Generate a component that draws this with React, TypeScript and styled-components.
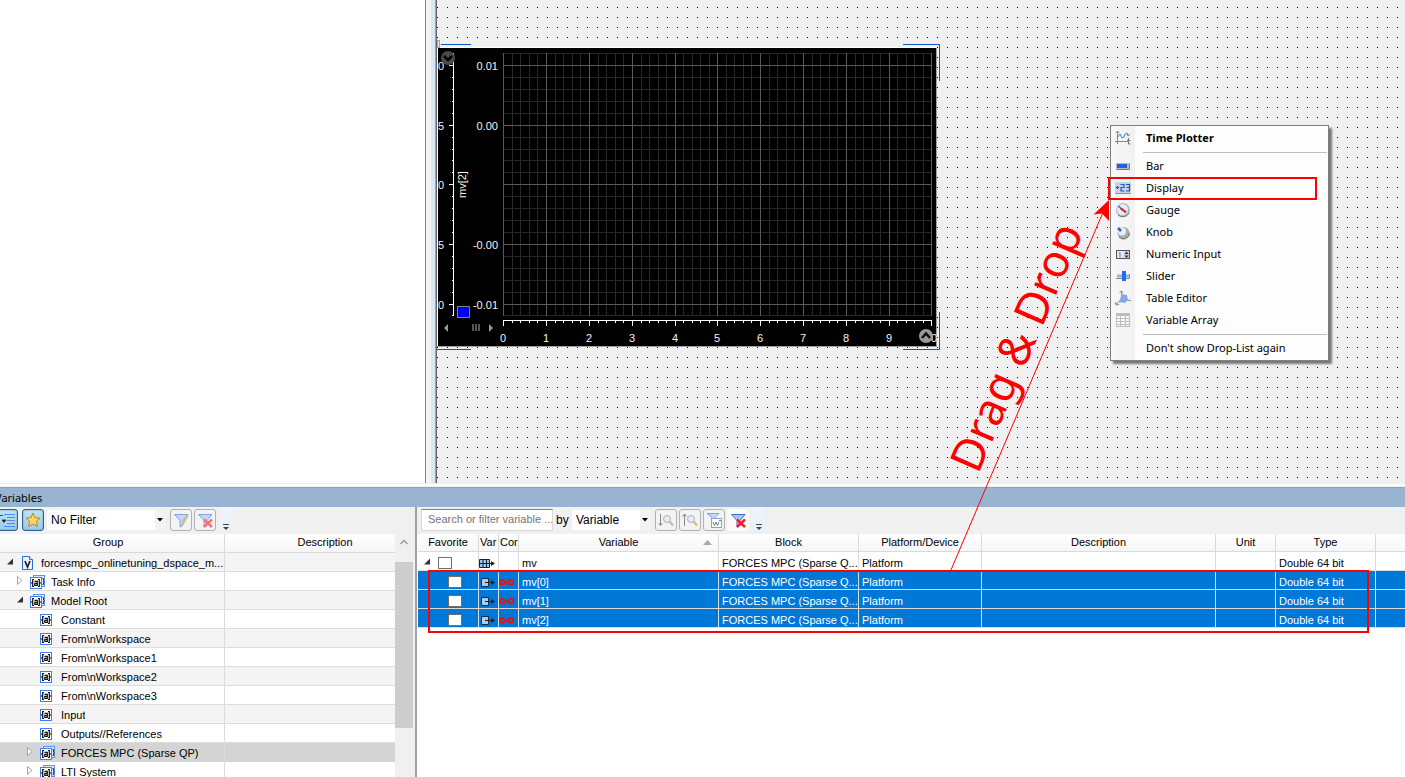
import React from "react";
import styled, { createGlobalStyle, css } from "styled-components";

const GlobalStyle = createGlobalStyle`
  *, *::before, *::after { box-sizing: border-box; }
  html, body { margin: 0; padding: 0; }
  body { background: #f0f0f0; color: #000; font: 11px/14px "Liberation Sans", Arial, sans-serif; }
  button, input, select { font: inherit; color: inherit; margin: 0; }
`;

const Page = styled.div`
  position: relative;
  display: flex;
  flex-direction: column;
  height: 100vh;
  overflow: hidden;
`;

/* ---------- upper work area ---------- */

const Workspace = styled.main`
  flex: 1;
  display: flex;
  min-height: 0;
`;

const ProjectPane = styled.aside`
  flex: 0 0 426px;
  background: #fff;
  border-right: 1px solid #83848f;
`;

const Splitter = styled.div`
  flex: 0 0 11px;
  background: linear-gradient(to right, #f4f4f4 5px, #dce7f5 5px, #dce7f5 9px, #a0a0a0 9px, #a0a0a0 10px, #696969 10px);
`;

const LayoutCanvas = styled.section`
  position: relative;
  flex: 1;
  overflow: hidden;
  background-image:
    linear-gradient(to right, #f0f0f0 9px, transparent 9px),
    linear-gradient(#f0f0f0 9px, #000 9px);
  background-size: 10px 10px;
  background-position: 1px -2px;
`;

const Instrument = styled.svg`
  position: absolute;
  left: 0;
  top: 38px;
  font: 11px "Liberation Sans", Arial, sans-serif;
`;

const Menu = styled.div`
  position: absolute;
  left: 673px;
  top: 125px;
  width: 219px;
  padding: 1px 1px 1px 2px;
  border: 1px solid #808080;
  background: linear-gradient(to right, #f8f8f8, #f1f1f1 24px, #fdfdfd 24px);
  box-shadow: 3px 3px 2px rgba(0, 0, 0, 0.5);
  font: 11px/22px "Noto Sans", "Segoe UI", sans-serif;
`;

const MenuItem = styled.button<{ $strong?: boolean }>`
  display: flex;
  align-items: center;
  width: 100%;
  height: 22px;
  padding: 0 0 0 2px;
  gap: 15px;
  border: 0;
  background: none;
  text-align: left;
  white-space: nowrap;
  font-weight: ${(p) => (p.$strong ? 700 : 400)};
`;

const MenuIcon = styled.svg`
  flex: none;
  width: 16px;
  height: 16px;
`;

const MenuRule = styled.hr`
  height: 1px;
  margin: 3px 0 2px 30px;
  border: 0;
  background: #bdbdbd;
`;

const TargetFrame = styled.div`
  position: absolute;
  left: -3px;
  top: 51px;
  width: 209px;
  height: 23px;
  border: 2px solid #f00;
  pointer-events: none;
`;

/* ---------- variables panel ---------- */

const Panel = styled.section`
  flex: 0 0 294px;
  display: flex;
  flex-direction: column;
  min-height: 0;
  border-top: 1px solid #f0f0f0;
  box-shadow: inset 0 2px #fff;
`;

const PanelTitle = styled.h2`
  flex: none;
  height: 20px;
  margin: 3px 0 0;
  border-top: 1px solid #a0a0a0;
  background: #99b4d1;
  text-indent: -5px;
  font: 11px/20px "Noto Sans", "Segoe UI", sans-serif;
`;

const PanelBody = styled.div`
  flex: 1;
  display: flex;
  min-height: 0;
`;

const TreeSide = styled.div`
  flex: 0 0 417px;
  display: flex;
  flex-direction: column;
  border-right: 2px solid #a0a0a0;
`;

const ListSide = styled.div`
  flex: 1;
  min-width: 0;
  display: flex;
  flex-direction: column;
`;

const Toolbar = styled.div<{ $list?: boolean }>`
  flex: 0 0 27px;
  display: flex;
  align-items: center;
  padding-bottom: 2px;
  padding-left: ${(p) => (p.$list ? 4 : 0)}px;
  margin-left: ${(p) => (p.$list ? 0 : -4)}px;
  overflow: hidden;
  font-size: 12px;
`;

const ToolButton = styled.button<{ $look?: "on" | "flat"; $gap?: number }>`
  flex: none;
  width: 22px;
  height: 22px;
  padding: 2px;
  margin-right: ${(p) => p.$gap ?? 2}px;
  border: 1px solid #adb2b5;
  border-radius: 3px;
  background: #f3f3f3;
  svg { display: block; width: 16px; height: 16px; opacity: 0.6; }
  ${(p) =>
    p.$look === "on" &&
    css`
      border-color: #2c628b;
      background: linear-gradient(#bfe3f5, #9acce6);
      box-shadow: inset 0 0 2px #5b93b5;
      svg { opacity: 1; }
    `}
  ${(p) =>
    p.$look === "flat" &&
    css`
      border-color: transparent;
      background: #fafafa;
      svg { opacity: 1; }
    `}
`;

const Combo = styled.select<{ $width: number }>`
  appearance: none;
  width: ${(p) => p.$width}px;
  height: 20px;
  padding: 0 0 0 4px;
  margin-right: 4px;
  border: 0;
  border-radius: 0;
  outline: 0;
  background:
    url("data:image/svg+xml,%3Csvg xmlns='http://www.w3.org/2000/svg' width='6' height='4'%3E%3Cpath d='M0 0h6L3 3.5z'/%3E%3C/svg%3E") right 3px center no-repeat,
    linear-gradient(#f3f3f3, #f3f3f3) right / 11px 100% no-repeat,
    #fff;
`;

const Overflow = styled.button`
  width: 13px;
  height: 27px;
  padding: 14px 0 0 4px;
  margin-left: 1px;
  border: 0;
  border-radius: 0 4px 4px 0;
  background: linear-gradient(#edf4fc, #e9f0f8);
  svg { display: block; }
`;

const SearchBox = styled.input`
  width: 132px;
  height: 22px;
  padding: 0 0 2px 6px;
  margin-right: 3px;
  border: 1px solid #d9d9d9;
  border-top-color: #808080;
  background: #fff;
  font-size: 11px;
  outline: 0;
  &::placeholder { color: #757575; opacity: 1; }
`;

const ByLabel = styled.label`
  width: 16px;
`;

const TreeBody = styled.div`
  flex: 1;
  display: flex;
  min-height: 0;
  overflow: hidden;
`;

const Grid = styled.table`
  flex: 1;
  align-self: flex-start;
  width: 100%;
  table-layout: fixed;
  border-spacing: 0;
  background: #fff;
  th:last-child, td:last-child { border-right: 0; }
`;

const Th = styled.th<{ $tall?: boolean; $shift?: string; $clip?: boolean }>`
  position: relative;
  height: ${(p) => (p.$tall ? 19 : 18)}px;
  padding: ${(p) => p.$shift ?? "0 0 1px"};
  border: 0 solid #d9dadb;
  border-width: 0 1px 1px 0;
  background: linear-gradient(#fff, #f5f6f7);
  overflow: hidden;
  white-space: nowrap;
  font-weight: 400;
  line-height: 14px;
  text-align: ${(p) => (p.$clip ? "left" : "center")};
`;

const SortMark = styled.svg`
  position: absolute;
  right: 6px;
  top: 6px;
`;

const Td = styled.td`
  height: 19px;
  padding: 2px 0 0 3px;
  border: 0 solid #dcdcdc;
  border-width: 0 1px 1px 0;
  overflow: hidden;
  white-space: nowrap;
  text-overflow: ellipsis;
  line-height: 14px;
`;

const TreeRow = styled.tr<{ $selected: boolean }>`
  background: #fff;
  &:nth-child(odd) { background: #f4f4f4; }
  ${(p) =>
    p.$selected &&
    css`
      && { background: #d4d4d4; }
      td { border-bottom-color: #d4d4d4; }
    `}
`;

const TreeCell = styled.div<{ $level: number }>`
  display: flex;
  align-items: center;
  gap: 5px;
  padding-left: ${(p) => 2 + p.$level * 10}px;
  svg { flex: none; display: block; }
`;

const TreeLabel = styled.span`
  overflow: hidden;
  text-overflow: ellipsis;
`;

const VarRow = styled.tr<{ $selected: boolean }>`
  background: ${(p) => (p.$selected ? "#0078d7" : "#fff")};
  color: ${(p) => (p.$selected ? "#fff" : "#000")};
  td { padding-top: 4px; }
`;

const IconTd = styled(Td)`
  padding-left: 0;
  svg { display: block; }
`;

const CheckCell = styled.div<{ $child: boolean }>`
  display: flex;
  align-items: center;
  gap: 6px;
  padding-left: ${(p) => (p.$child ? 11 : 1)}px;
`;

const Check = styled.input`
  appearance: none;
  width: 14px;
  height: 12px;
  border: 1px solid #6f6f6f;
  background: #fff;
`;

const ScrollBar = styled.div`
  flex: 0 0 19px;
  background: #f0f0f0;
  border-right: 2px solid #f0f0f0;
  svg { display: block; margin: 5px 5px 17px; }
`;

const ScrollThumb = styled.div`
  height: 166px;
  background: #cdcdcd;
`;

const ListBody = styled.div`
  position: relative;
  flex: 1;
  display: flex;
  padding-left: 1px;
  background: #fff;
  min-height: 0;
`;

const SelectionFrame = styled.div`
  position: absolute;
  left: 11px;
  top: 36px;
  width: 941px;
  height: 63px;
  border: 2px solid #f00;
  pointer-events: none;
`;

const Annotation = styled.svg`
  position: absolute;
  left: 0;
  top: 0;
  pointer-events: none;
  font: 45px "Noto Sans", "Segoe UI", sans-serif;
`;

/* ---------- drawings ---------- */

const subdivide = (stops: number[]) =>
  stops.slice(0, -1).flatMap((a, i) => [1, 2, 3, 4].map((k) => a + Math.round((k * (stops[i + 1] - a)) / 5)));

const xMajor = [503, 546, 589, 632, 675, 717, 760, 803, 846, 889, 931];
const yMajor = [65, 125, 184, 244, 304];
const xMinor = subdivide(xMajor);
const yMinor = [53, ...subdivide(yMajor), 315];
const yLabels = ["0.01", "0.00", "", "-0.00", "-0.01"];
const axisDigits = ["0", "5", "0", "5", "0"];

const Plotter = () => (
  <Instrument width="510" height="314" viewBox="437 38 510 314" role="img" aria-label="Time plotter mv[2]">
    <g shapeRendering="crispEdges">
      <path d="M437 47h500v300h-500z" fill="#fff" />
      <path d="M438 48h498v298h-498z" fill="#000" />
      <path d="M936 48h1v299h-500v-1h499z" fill="#a0a0a0" />
      <path d="M437.5 40.500h2v7h-2z" fill="#f0f0f0" stroke="#a0a0a0" />
      <path d="M441 44.500h30M903 44.500h36.500V81M437 349.500h34M903 349.500h36.500V312" fill="none" stroke="#0a56c8" />
      <g fill="#282828">
        {xMinor.map((x) => <rect key={x} x={x} y="53" width="1" height="263" />)}
        {yMinor.map((y) => <rect key={y} x="503" y={y} width="429" height="1" />)}
      </g>
      <g fill="#5a5a5a">
        {xMajor.map((x) => <rect key={x} x={x} y="53" width="1" height="263" />)}
        {yMajor.map((y) => <rect key={y} x="503" y={y} width="429" height="1" />)}
      </g>
      <g fill="#fff">
        <rect x="453" y="53" width="1" height="263" />
        {yMinor.map((y) => <rect key={y} x="452" y={y} width="1" height="1" />)}
        {yMajor.map((y) => <rect key={y} x="449" y={y} width="4" height="1" />)}
        <rect x="503" y="320" width="429" height="1" />
        {xMinor.map((x) => <rect key={x} x={x} y="321" width="1" height="2" />)}
        {xMajor.map((x) => <rect key={x} x={x} y="321" width="1" height="5" />)}
      </g>
      <rect x="457.500" y="306.500" width="12" height="11" fill="#00f" stroke="#808080" />
      <path d="M472 324h2v7h-2zM475 324h2v7h-2zM478 324h2v7h-2z" fill="#555" />
    </g>
    <path d="M448 324v8l-4-4zM489 324v8l4-4z" fill="#999" />
    <g fill="#f4f4f4">
      {yMajor.map((y, i) => <text key={y} x="438" y={y + 5}>{axisDigits[i]}</text>)}
      {yMajor.map((y, i) => yLabels[i] && <text key={y} x="498" y={y + 5} textAnchor="end">{yLabels[i]}</text>)}
      {xMajor.slice(0, 10).map((x, i) => <text key={x} x={x} y="342" textAnchor="middle">{i}</text>)}
      <text x="931" y="342">0</text>
      <text transform="translate(466 198) rotate(-90)">mv[2]</text>
    </g>
    <circle cx="448" cy="58" r="7" fill="#4a4a4a" />
    <path d="M444 56l4 4 4-4" fill="none" stroke="#000" strokeWidth="2.500" />
    <circle cx="926" cy="336" r="7" fill="#9a9a9a" />
    <path d="M922 338l4-4.500 4 4.500" fill="none" stroke="#111" strokeWidth="2.500" />
  </Instrument>
);

const menuArt: Record<string, React.ReactNode> = {
  plot: (
    <g fill="none">
      <path d="M2.500 1v13M0 11.500h13" stroke="#888" />
      <path d="M.500 3l2-2 2 2" stroke="#888" />
      <path d="M2 8l3-4 2 4 2-1 1-3 2-1 1 3 2-2" stroke="#3f7be0" />
      <path d="M13.500 8v6h2M12 10.500h3.500" stroke="#777" />
    </g>
  ),
  bar: (
    <g>
      <rect x="1" y="5" width="14" height="6" fill="#b9bcc2" />
      <path d="M1.500 11.500h13V6" fill="none" stroke="#777" />
      <rect x="2" y="6" width="10" height="4" fill="#1f63e0" />
    </g>
  ),
  display: (
    <g>
      <rect x="0" y="2" width="16" height="12" fill="#cdd3de" />
      <path d="M0 13.500h16" stroke="#8d9099" />
      <path d="M1 7.500h3M2.500 6v3M5.500 4.500h3.500v3h-3v3.500h3.500M11 4.500h3.500v6.500H11M11.500 7.500h3" fill="none" stroke="#1458d8" strokeWidth="1.200" />
    </g>
  ),
  gauge: (
    <g>
      <circle cx="8" cy="8" r="7" fill="#b4b7bd" />
      <circle cx="7.500" cy="7.500" r="5.500" fill="#e9ebf1" />
      <path d="M3.500 4l4 4" stroke="#1f63e0" strokeWidth="1.500" />
      <path d="M6 6.500l5 4" stroke="#e01818" strokeWidth="2.200" />
      <path d="M3 13a7 7 0 0 0 11-2" stroke="#70747c" fill="none" />
    </g>
  ),
  knob: (
    <g>
      <circle cx="8.500" cy="9" r="6" fill="#a9abb0" />
      <circle cx="7" cy="7.500" r="4" fill="#eceef2" />
      <path d="M3 4l3 3" stroke="#1f63e0" strokeWidth="2.500" />
      <path d="M4 13a6 6 0 0 0 10.500-4" stroke="#6c6f76" fill="none" />
    </g>
  ),
  numeric: (
    <g>
      <rect x="1.500" y="4.500" width="13" height="8" fill="#dfe8f3" stroke="#555" />
      <rect x="9" y="5" width="5" height="7" fill="#cfcfcf" />
      <path d="M5 6.500v5M4 7h1" stroke="#3f8be8" fill="none" />
      <path d="M9.500 8l2-2.500 2 2.500zM9.500 9.500l2 2.500 2-2.500z" fill="#333" />
    </g>
  ),
  slider: (
    <g>
      <path d="M1 10.500h13.500V6" stroke="#888" fill="none" />
      <path d="M2 8h12" stroke="#8fb4ec" strokeWidth="3" />
      <rect x="7" y="3" width="4" height="10" fill="#1f6bf0" />
    </g>
  ),
  table: (
    <g>
      <path d="M6.500 1v9L1 14M6 9.500l10 1" stroke="#888" fill="none" />
      <path d="M4.500 2.500l2-1.500 1.500 2M0 12l1 3 3-.500" stroke="#888" fill="none" />
      <path d="M6 4l6 1 1 5-3 3-7-1c2-2 3-4 3-8z" fill="#86a7e0" />
    </g>
  ),
  array: (
    <g fill="none" stroke="#bdbdbd">
      <rect x="1.500" y="1.500" width="13" height="13" fill="#fafafa" />
      <path d="M1 3h14" strokeWidth="2" />
      <path d="M1 6.500h14M1 9.500h14M1 12.500h14M5.500 4v11M10.500 4v11" />
    </g>
  ),
};

const menuItems = [
  ["bar", "Bar"],
  ["display", "Display"],
  ["gauge", "Gauge"],
  ["knob", "Knob"],
  ["numeric", "Numeric Input"],
  ["slider", "Slider"],
  ["table", "Table Editor"],
  ["array", "Variable Array"],
];

const Art = ({ name }: { name?: string }) => <MenuIcon viewBox="0 0 16 16">{name && menuArt[name]}</MenuIcon>;

const Expander = ({ open }: { open?: boolean }) => (
  <svg width="10" height="14" viewBox="0 0 10 14">
    {open === true && <path d="M8 2.500v6H2z" fill="#333" />}
    {open === false && <path d="M2.500 1.500v8L7 5.500z" fill="#fff" stroke="#a6a6a6" />}
  </svg>
);

const Braces = () => (
  <g fill="none" stroke="#111" strokeWidth="1.200">
    <path d="M4.500 4h-1.300v3l-1 .5 1 .5v3h1.300M8.500 4h1.300v3l1 .5-1 .5v3H8.500" />
    <path d="M5 5.800h2.800v4H5.300V7.800H7.500" />
  </g>
);

const NodeIcon = ({ kind }: { kind: "doc" | "group" | "item" }) => (
  <svg width="16" height="16" viewBox="0 0 16 16">
    {kind === "doc" && (
      <g>
        <path d="M2.500 1.500h7l3 3v10h-10z" fill="#eef4ff" stroke="#2a6be0" />
        <path d="M9.500 1.500v3h3" fill="#fff" stroke="#2a6be0" />
        <path d="M5 6l2.500 6L10 6" fill="none" stroke="#222" strokeWidth="1.700" />
      </g>
    )}
    {kind === "group" && (
      <g>
        <rect x="3.500" y="1.500" width="11" height="11" fill="#dbe8ff" stroke="#5c91f0" />
        <path d="M12.500 4.500h1v2.500l1 .5-1 .5v2.500h-1" fill="none" stroke="#333" />
      </g>
    )}
    {kind !== "doc" && (
      <g transform={kind === "group" ? "translate(0 1)" : undefined}>
        <rect x=".5" y="2.500" width="11" height="11" fill="#fff" stroke="#3f7ff0" />
        <g transform="translate(-.5 .5)"><Braces /></g>
      </g>
    )}
  </svg>
);

const Funnel = () => <path d="M1.500 2.500l5.500 6v6.500l3-2V8.500l5-6z" fill="#a9c4f5" stroke="#3b6fd6" />;

const toolArt: Record<string, React.ReactNode> = {
  tree: (
    <g>
      <path d="M5 2.500h11M8 5.500h8M8 8.500h8M8 11.500h8M5 14.500h11" stroke="#4f8df0" />
      <path d="M0 3.500h4M3 8h4L5 10.500z" stroke="#222" fill="#222" strokeWidth=".8" />
    </g>
  ),
  star: <path d="M8 1l2.100 4.600 4.900.500-3.700 3.400 1.100 5L8 12l-4.400 2.500 1.100-5L1 6.100l4.900-.500z" fill="#ffd75e" stroke="#b5862c" />,
  edit: (
    <g>
      <Funnel />
      <path d="M14 3l-5 9-1 2 2-1 5-9z" fill="#f5cf4a" stroke="#9a7322" strokeWidth=".7" />
    </g>
  ),
  clear: (
    <g>
      <Funnel />
      <path d="M7 7.500l8 7.500M15 7.500l-8 7.500" stroke="#f02020" strokeWidth="2.400" />
    </g>
  ),
  down: (
    <g fill="none">
      <path d="M2.500 2v11M.500 11l2 2.500 2-2.500" stroke="#444" />
      <circle cx="9" cy="7" r="3.500" fill="#dceaf7" stroke="#6d8fae" />
      <path d="M11.500 9.500l3.500 4" stroke="#c98b3f" strokeWidth="2" />
    </g>
  ),
  up: (
    <g fill="none">
      <path d="M2.500 14V2M.500 4.500l2-2.500 2 2.500" stroke="#444" />
      <circle cx="9" cy="7" r="3.500" fill="#dceaf7" stroke="#6d8fae" />
      <path d="M11.500 9.500l3.500 4" stroke="#c98b3f" strokeWidth="2" />
    </g>
  ),
  regex: (
    <g>
      <path d="M1 1.500h12l-4 4v3H6v-3z" fill="#a9c4f5" stroke="#3b6fd6" />
      <rect x="5.500" y="6.500" width="10" height="9" fill="#fff" stroke="#3b6fd6" />
      <path d="M7 10l1.500 3.500L10 10l1.500 3.500L13 10M13 8.500h2" fill="none" stroke="#333" />
    </g>
  ),
};

const Tool = ({ art, label, look, gap }: { art: string; label: string; look?: "on" | "flat"; gap?: number }) => (
  <ToolButton type="button" aria-label={label} $look={look} $gap={gap}>
    <svg viewBox="0 0 16 16">{toolArt[art]}</svg>
  </ToolButton>
);

const More = () => (
  <Overflow type="button" aria-label="More tools">
    <svg width="6" height="8" viewBox="0 0 6 8"><path d="M0 1.500h6" stroke="#444" /><path d="M0 4h6L3 7z" fill="#444" /></svg>
  </Overflow>
);

const VarIcon = ({ matrix }: { matrix?: boolean }) => (
  <svg width="18" height="14" viewBox="0 0 18 14">
    {matrix ? (
      <path d="M.500 3.500h10v8H.500zM4 3.500v8M7.500 3.500v8M0 7.500h12" fill="#9cc4ee" stroke="#222" />
    ) : (
      <path d="M2.500 3.500h7v8h-7z" fill="#a8cdf2" stroke="#1c2b3a" />
    )}
    <path d="M6 7.500h7" stroke="#222" />
    <path d="M12 5l4 2.500-4 2.500z" fill="#222" />
  </svg>
);

const LinkIcon = () => (
  <svg width="16" height="14" viewBox="0 0 16 14">
    <g fill="none" stroke="#d81818" strokeWidth="1.900">
      <rect x="1" y="5" width="4.500" height="4.500" rx="2" />
      <rect x="9.500" y="5" width="4.500" height="4.500" rx="2" />
      <path d="M5 7.300h5" />
    </g>
  </svg>
);

/* ---------- data ---------- */

type Node = { label: string; level: number; kind: "doc" | "group" | "item"; open?: boolean; selected?: boolean };

const nodes: Node[] = [
  { label: "forcesmpc_onlinetuning_dspace_m...", level: 0, kind: "doc", open: true },
  { label: "Task Info", level: 1, kind: "group", open: false },
  { label: "Model Root", level: 1, kind: "group", open: true },
  { label: "Constant", level: 2, kind: "item" },
  { label: "From\\nWorkspace", level: 2, kind: "item" },
  { label: "From\\nWorkspace1", level: 2, kind: "item" },
  { label: "From\\nWorkspace2", level: 2, kind: "item" },
  { label: "From\\nWorkspace3", level: 2, kind: "item" },
  { label: "Input", level: 2, kind: "item" },
  { label: "Outputs//References", level: 2, kind: "item" },
  { label: "FORCES MPC (Sparse QP)", level: 2, kind: "group", open: false, selected: true },
  { label: "LTI System", level: 2, kind: "group", open: false },
];

const variables = ["mv", "mv[0]", "mv[1]", "mv[2]"];
const columnWidths = [61, 20, 20, 200, 140, 123, 234, 60, 100];

export default function App() {
  return (
    <Page>
      <GlobalStyle />
      <Workspace>
        <ProjectPane />
        <Splitter />
        <LayoutCanvas>
          <Plotter />
          <Menu role="menu">
            <MenuItem role="menuitem" $strong><Art name="plot" />Time Plotter</MenuItem>
            <MenuRule />
            {menuItems.map(([art, label]) => (
              <MenuItem role="menuitem" key={art}><Art name={art} />{label}</MenuItem>
            ))}
            <MenuRule />
            <MenuItem role="menuitem"><Art />Don't show Drop-List again</MenuItem>
            <TargetFrame />
          </Menu>
        </LayoutCanvas>
      </Workspace>

      <Panel>
        <PanelTitle>Variables</PanelTitle>
        <PanelBody>
          <TreeSide>
            <Toolbar>
              <Tool art="tree" label="Show tree" look="on" gap={4} />
              <Tool art="star" label="Favorites" look="on" gap={3} />
              <Combo $width={119} aria-label="Filter"><option>No Filter</option></Combo>
              <Tool art="edit" label="Edit filter" />
              <Tool art="clear" label="Clear filter" />
              <More />
            </Toolbar>
            <TreeBody>
              <Grid>
                <colgroup><col style={{ width: 225 }} /><col /></colgroup>
                <thead>
                  <tr><Th $tall $shift="0 8px 2px 0">Group</Th><Th $tall $shift="0 0 2px 30px">Description</Th></tr>
                </thead>
                <tbody>
                  {nodes.map((n) => (
                    <TreeRow key={n.label} $selected={!!n.selected}>
                      <Td>
                        <TreeCell $level={n.level}>
                          <Expander open={n.open} />
                          <NodeIcon kind={n.kind} />
                          <TreeLabel>{n.label}</TreeLabel>
                        </TreeCell>
                      </Td>
                      <Td />
                    </TreeRow>
                  ))}
                </tbody>
              </Grid>
              <ScrollBar>
                <svg width="8" height="6" viewBox="0 0 8 6"><path d="M.500 5L4 1.500 7.500 5" fill="none" stroke="#999" strokeWidth="1.400" /></svg>
                <ScrollThumb />
              </ScrollBar>
            </TreeBody>
          </TreeSide>

          <ListSide>
            <Toolbar $list>
              <SearchBox aria-label="Search variables" placeholder="Search or filter variable ..." />
              <ByLabel htmlFor="search-by">by</ByLabel>
              <Combo id="search-by" $width={79}><option>Variable</option></Combo>
              <Tool art="down" label="Find next" />
              <Tool art="up" label="Find previous" />
              <Tool art="regex" label="Wildcard filter" />
              <Tool art="clear" label="Remove filter" look="flat" />
              <More />
            </Toolbar>
            <ListBody>
              <Grid>
                <colgroup>
                  {columnWidths.map((w, i) => <col key={i} style={{ width: w }} />)}
                  <col />
                </colgroup>
                <thead>
                  <tr>
                    <Th>Favorite</Th>
                    <Th $clip $shift="0 0 1px 1px">Var</Th>
                    <Th $clip $shift="0 0 1px 1px">Cor</Th>
                    <Th>Variable<SortMark width="9" height="5" viewBox="0 0 9 5"><path d="M0 5h9L4.500 0z" fill="#a8a8a8" /></SortMark></Th>
                    <Th>Block</Th>
                    <Th>Platform/Device</Th>
                    <Th>Description</Th>
                    <Th>Unit</Th>
                    <Th>Type</Th>
                    <Th />
                  </tr>
                </thead>
                <tbody>
                  {variables.map((name, i) => (
                    <VarRow key={name} $selected={i > 0}>
                      <Td>
                        <CheckCell $child={i > 0}>
                          <Expander open={i === 0 ? true : undefined} />
                          <Check type="checkbox" aria-label={"Favorite " + name} />
                        </CheckCell>
                      </Td>
                      <IconTd><VarIcon matrix={i === 0} /></IconTd>
                      <IconTd>{i > 0 && <LinkIcon />}</IconTd>
                      <Td>{name}</Td>
                      <Td>FORCES MPC (Sparse Q...</Td>
                      <Td>Platform</Td>
                      <Td />
                      <Td />
                      <Td>Double 64 bit</Td>
                      <Td />
                    </VarRow>
                  ))}
                </tbody>
              </Grid>
              <SelectionFrame />
            </ListBody>
          </ListSide>
        </PanelBody>
      </Panel>

      <Annotation width="1200" height="600" viewBox="0 0 1200 600">
        <path d="M951 570L1104 210" stroke="#f00" strokeWidth="1" fill="none" />
        <path d="M1109 200l-15.500 14.500 8.500-1 7 7.500z" fill="#f00" />
        <text transform="translate(978 475) rotate(-66.5)" fill="#f00">Drag &amp; Drop</text>
      </Annotation>
    </Page>
  );
}
